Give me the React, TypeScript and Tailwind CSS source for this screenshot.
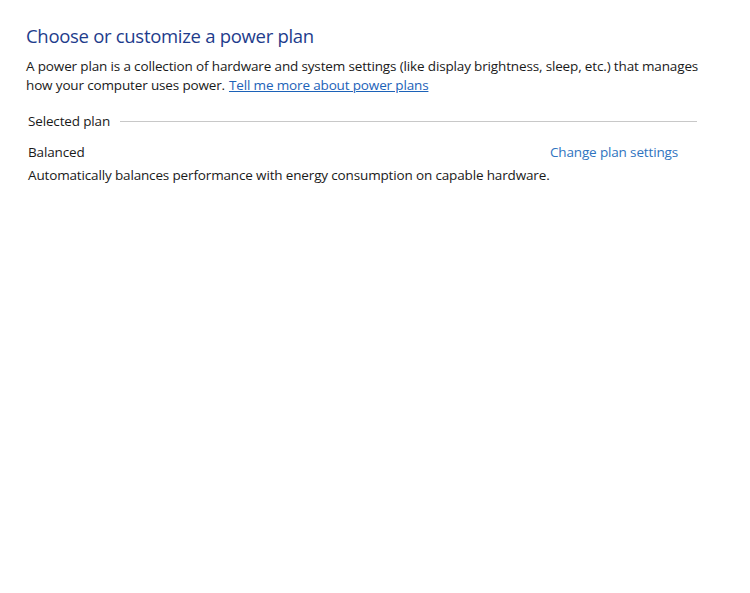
import React from 'react';

export default function App() {
  return (
    <div className="w-[750px] h-[593px] bg-white text-[#1a1a1a]" style={{ fontFamily: '"Open Sans", "Noto Sans", sans-serif' }}>
      <div className="pl-[26px] pr-[46px] pt-[22px] text-[13.5px] tracking-[-0.15px]">
        <h1 className="text-[18.5px] leading-[28px] tracking-[-0.3px] text-[#1e3c8c]">Choose or customize a power plan</h1>
        <div className="mt-[7px] leading-[19px]">
          <div>A power plan is a collection of hardware and system settings (like display brightness, sleep, etc.) that manages</div>
          <div className="flex gap-[4px]">
            <span>how your computer uses power.</span>
            <a href="#" className="text-[#1c62b8] underline">Tell me more about power plans</a>
          </div>
        </div>

        <div className="mt-[16px] pl-[2px] pr-[7px]">
          <div className="flex items-center gap-[10px] h-[20px]">
            <span>Selected plan</span>
            <div className="flex-1 h-px bg-[#c8c8c8]" />
          </div>

          <div className="mt-[11px] flex items-center h-[20px] pr-[19px]">
            <span className="flex-1">Balanced</span>
            <a href="#" className="text-[#2f74c0]">Change plan settings</a>
          </div>
          <p className="mt-[2px] leading-[22px]">
            Automatically balances performance with energy consumption on capable hardware.
          </p>
        </div>
      </div>
    </div>
  );
}
